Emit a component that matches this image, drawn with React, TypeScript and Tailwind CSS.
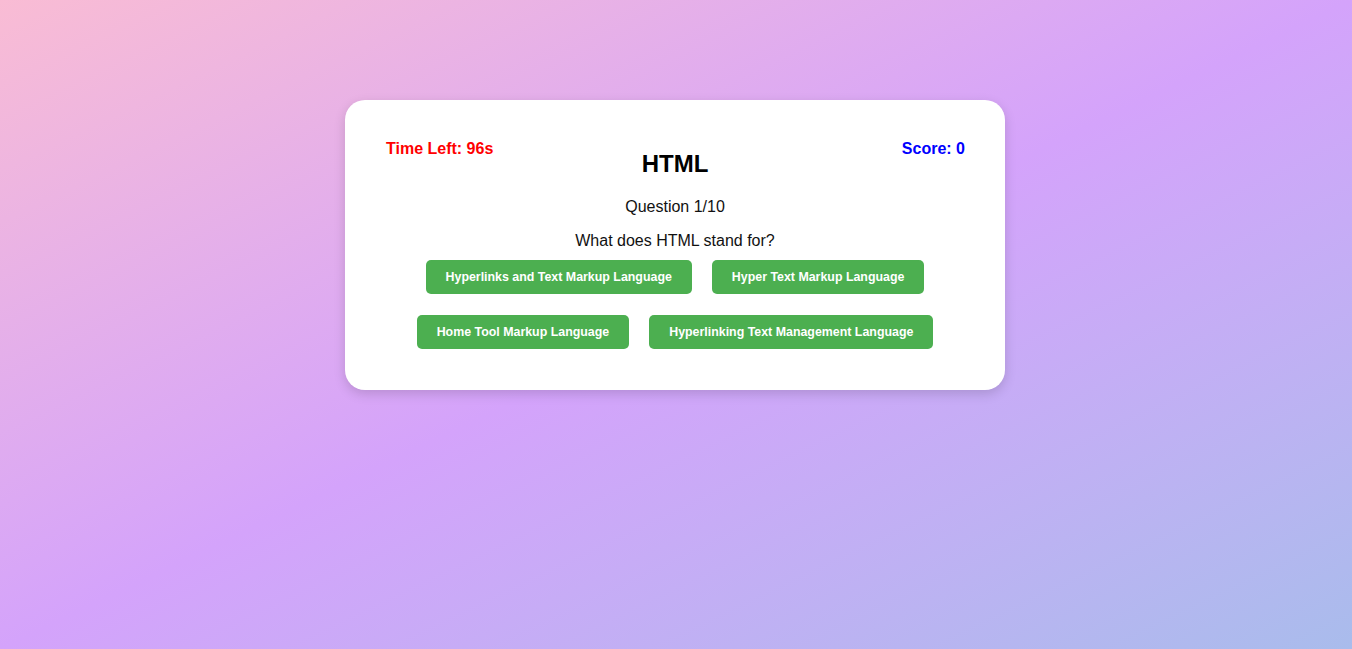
import React from 'react';

const options = [
    ['Hyperlinks and Text Markup Language', 'Hyper Text Markup Language'],
    ['Home Tool Markup Language', 'Hyperlinking Text Management Language'],
];

export default function App() {
    return (
        <div
            className="min-h-screen w-full bg-linear-to-br from-[#f9bcd4] via-[#d4a3fb] to-[#a9bcec] pt-[100px]"
            style={{ fontFamily: "'Liberation Sans', Arial, sans-serif" }}
        >
            <div className="relative mx-auto w-[660px] -translate-x-px rounded-[20px] bg-white pt-[50px] pb-[41px] text-center shadow-[0_4px_12px_rgba(0,0,0,0.15)]">
                {/* Timer / score */}
                <div className="absolute top-[40px] left-[41px] text-[16px] leading-[18px] font-bold text-[#f00]">Time Left: 96s</div>
                <div className="absolute top-[40px] right-[40px] text-[16px] leading-[18px] font-bold text-[#00f]">Score: 0</div>

                <h2 className="text-[24px] leading-[28px] font-bold text-black">HTML</h2>
                <p className="mt-[20px] text-[16px] leading-[18px] text-[#111]">Question 1/10</p>
                <p className="mt-[16px] text-[16px] leading-[18px] text-[#111]">What does HTML stand for?</p>

                <div className="mt-[10px] flex flex-col gap-[21px]">
                    {options.map((row, i) => (
                        <div key={i} className="flex justify-center gap-[20px]">
                            {row.map((opt) => (
                                <button
                                    key={opt}
                                    className="flex h-[34px] items-center rounded-[5px] bg-[#4caf50] px-[20px] text-[12.4px] font-bold text-white"
                                >
                                    {opt}
                                </button>
                            ))}
                        </div>
                    ))}
                </div>
            </div>
        </div>
    );
}
